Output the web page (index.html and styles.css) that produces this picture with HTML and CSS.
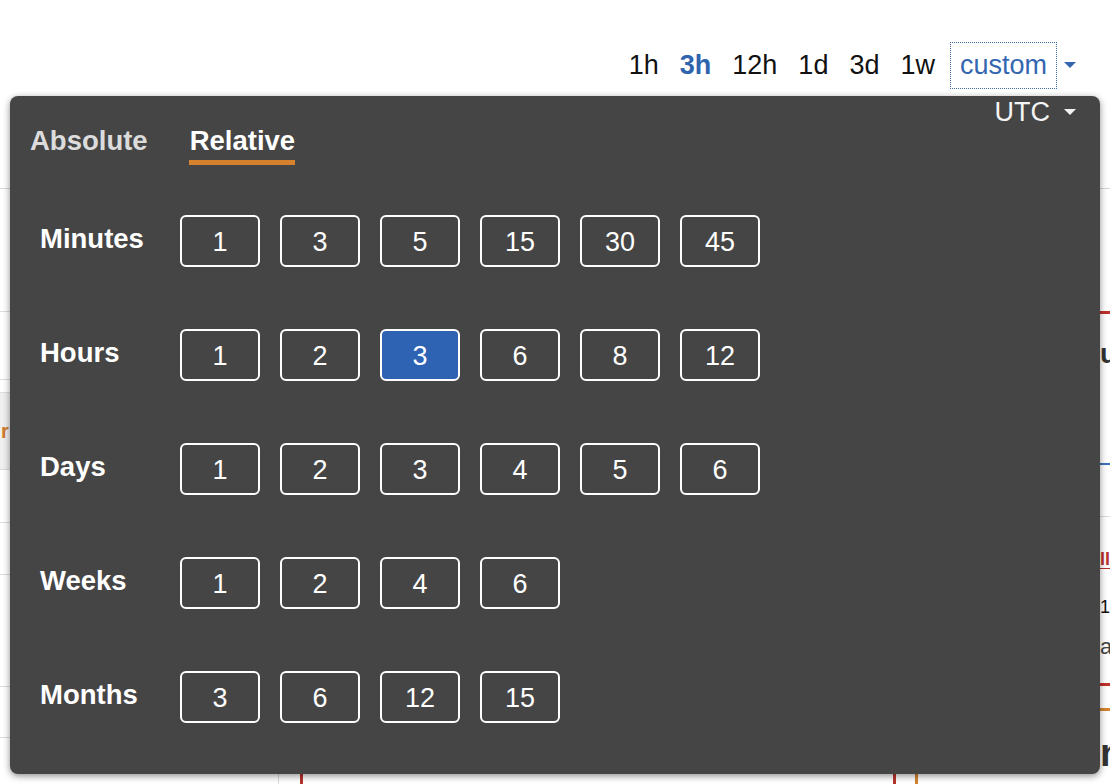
FILE: index.html
```html
<!DOCTYPE html>
<html lang="en">
<head>
<meta charset="utf-8">
<title>Time range picker</title>
<link rel="stylesheet" href="styles.css">
</head>
<body>
<div class="page">
  <header class="range-bar">
    <nav class="ranges">
      <span class="range">1h</span>
      <span class="range range-active">3h</span>
      <span class="range">12h</span>
      <span class="range">1d</span>
      <span class="range">3d</span>
      <span class="range">1w</span>
      <span class="range range-custom">custom</span>
      <svg class="caret caret-blue" width="12" height="7" viewBox="0 0 12 7"><path d="M0 0h12L6 6z"/></svg>
    </nav>
  </header>

  <div class="content">
    <aside class="side">
      <div class="side-row h124"></div>
      <div class="side-row h68"></div>
      <div class="side-row h12 no-line"></div>
      <div class="side-row band"><span class="band-text">r</span></div>
      <div class="side-row h53"></div>
      <div class="side-row h52"></div>
      <div class="side-row h112"></div>
      <div class="side-row h51"></div>
      <div class="side-row h46 no-line"></div>
    </aside>
    <div class="chart"></div>
    <div class="info">
      <div class="bar bar-red"></div>
      <div class="frag frag-title">u</div>
      <div class="bar bar-blue"></div>
      <div class="bar bar-gray"></div>
      <div class="frag frag-link">ll</div>
      <div class="frag frag-num">1</div>
      <div class="frag frag-meta">a</div>
      <div class="bar bar-red2"></div>
      <div class="bar bar-orange"></div>
      <div class="frag frag-big">n</div>
    </div>
  </div>

  <section class="picker">
    <div class="picker-head">
      <div class="tabs">
        <span class="tab">Absolute</span>
        <span class="tab tab-active">Relative</span>
      </div>
      <div class="tz">UTC <svg class="caret caret-white" width="12" height="7" viewBox="0 0 12 7"><path d="M0 0h12L6 6z"/></svg></div>
    </div>
    <div class="units">
      <div class="unit-row">
        <span class="unit-label">Minutes</span>
        <div class="unit-btns">
          <span class="btn">1</span><span class="btn">3</span><span class="btn">5</span><span class="btn">15</span><span class="btn">30</span><span class="btn">45</span>
        </div>
      </div>
      <div class="unit-row">
        <span class="unit-label">Hours</span>
        <div class="unit-btns">
          <span class="btn">1</span><span class="btn">2</span><span class="btn btn-active">3</span><span class="btn">6</span><span class="btn">8</span><span class="btn">12</span>
        </div>
      </div>
      <div class="unit-row">
        <span class="unit-label">Days</span>
        <div class="unit-btns">
          <span class="btn">1</span><span class="btn">2</span><span class="btn">3</span><span class="btn">4</span><span class="btn">5</span><span class="btn">6</span>
        </div>
      </div>
      <div class="unit-row">
        <span class="unit-label">Weeks</span>
        <div class="unit-btns">
          <span class="btn">1</span><span class="btn">2</span><span class="btn">4</span><span class="btn">6</span>
        </div>
      </div>
      <div class="unit-row">
        <span class="unit-label">Months</span>
        <div class="unit-btns">
          <span class="btn">3</span><span class="btn">6</span><span class="btn">12</span><span class="btn">15</span>
        </div>
      </div>
    </div>
  </section>
</div>
</body>
</html>
```

FILE: styles.css
```css
* { box-sizing: border-box; }

html, body {
  margin: 0;
  padding: 0;
  background: #fff;
}

body {
  font-family: "Liberation Sans", Arial, Helvetica, sans-serif;
  color: #111;
  width: 1110px;
  height: 784px;
  overflow: hidden;
}

.page {
  position: relative;
  width: 1110px;
  height: 784px;
  overflow: hidden;
}

/* ---------- top range bar ---------- */
.range-bar {
  height: 188px;
  padding-top: 42px;
  padding-right: 34px;
}

.ranges {
  display: flex;
  justify-content: flex-end;
  align-items: center;
  gap: 21px;
  font-size: 27px;
  line-height: 45px;
}

.range { color: #111; }

.range-active {
  color: #2e63ad;
  font-weight: bold;
}

.range-custom {
  color: #3467b0;
  border: 1px dotted #3d6aa6;
  padding: 0 9px;
  margin-left: -6px;
  height: 47px;
  line-height: 45px;
}

.caret { display: block; }
.caret-blue { fill: #3467b0; margin-left: -14px; }
.caret-white { fill: #f2f2f2; }

/* ---------- background content ---------- */
.content {
  display: flex;
  border-top: 1px solid #d6d6d6;
  height: 596px;
}

.side {
  flex: 0 0 279px;
  border-right: 1px solid #dcdcdc;
  display: flex;
  flex-direction: column;
}

.side-row { border-bottom: 1px solid #dcdcdc; }
.side-row.no-line { border-bottom: none; }
.h124 { height: 123px; }
.h68 { height: 68px; }
.h12 { height: 12px; }
.h53 { height: 53px; }
.h52 { height: 52px; }
.h112 { height: 112px; }
.h51 { height: 51px; }
.h46 { height: 46px; }

.band {
  height: 78px;
  background: #efefef;
  border-top: 1px solid #dcdcdc;
  display: flex;
  align-items: center;
  padding-left: 1px;
}

.band-text {
  color: #d07a2c;
  font-weight: bold;
  font-size: 20px;
}

.chart {
  flex: 0 0 596px;
  margin-left: 21px;
  border-left: 3px solid #b8322d;
  border-right: 3px solid #b8322d;
}

.info {
  margin-left: 19px;
  flex: 1 1 auto;
  min-width: 0;
  overflow: hidden;
  border-left: 3px solid #d4842f;
  display: flex;
  flex-direction: column;
  padding-top: 122px;
  white-space: nowrap;
}

.bar { height: 3px; flex: none; }
.bar-red { background: #c0322c; }
.bar-blue { background: #3d72b8; height: 2px; margin-top: 94px; }
.bar-gray { background: #dcdcdc; height: 1px; margin-top: 51px; }
.bar-red2 { background: #c0322c; margin-top: 24px; }
.bar-orange { background: #d4842f; margin-top: 22px; }

.frag { padding-left: 182px; flex: none; }

.frag-title {
  font-size: 28px;
  font-weight: bold;
  color: #333;
  line-height: 30px;
  margin-top: 25px;
}

.frag-link {
  color: #b8322d;
  font-weight: bold;
  font-size: 18px;
  line-height: 20px;
  margin-top: 32px;
  text-decoration: underline;
  text-underline-offset: 3px;
}

.frag-num {
  font-size: 18px;
  line-height: 20px;
  color: #111;
  margin-top: 28px;
}

.frag-meta {
  font-size: 22px;
  line-height: 24px;
  color: #444;
  margin-top: 18px;
}

.frag-big {
  font-size: 38px;
  font-weight: bold;
  color: #333;
  line-height: 40px;
  margin-top: 22px;
}

/* ---------- picker popup (overlay) ---------- */
.picker {
  position: absolute;
  left: 10px;
  top: 96px;
  width: 1090px;
  height: 678px;
  background: #454545;
  border-radius: 8px;
  box-shadow: 0 2px 7px rgba(0, 0, 0, 0.45);
  padding: 1px 24px 0 20px;
  color: #fff;
}

.picker-head {
  display: flex;
  justify-content: space-between;
  align-items: flex-start;
}

.tabs {
  display: flex;
  gap: 41px;
  margin-top: 29px;
}

.tab {
  font-size: 27.5px;
  font-weight: bold;
  line-height: 30px;
  color: #dcdcdc;
  padding-bottom: 4px;
  border-bottom: 5px solid transparent;
}

.tab-active {
  color: #fff;
  border-bottom-color: #d5812e;
  padding-left: 1px;
}

.tz {
  display: flex;
  align-items: center;
  gap: 14px;
  font-size: 27px;
  line-height: 30px;
  color: #f4f4f4;
}

.units {
  display: flex;
  flex-direction: column;
  gap: 62px;
  padding-left: 10px;
  margin-top: 50px;
}

.unit-row {
  display: flex;
  align-items: flex-start;
}

.unit-label {
  width: 140px;
  font-size: 27.5px;
  font-weight: bold;
  line-height: 30px;
  margin-top: 9px;
}

.unit-btns {
  display: flex;
  gap: 20px;
}

.btn {
  width: 80px;
  height: 52px;
  border: 2px solid #fff;
  border-radius: 6px;
  display: flex;
  align-items: center;
  justify-content: center;
  font-size: 27px;
  padding-top: 3px;
  color: #fff;
}

.btn-active {
  background: #2e63b4;
}
```
